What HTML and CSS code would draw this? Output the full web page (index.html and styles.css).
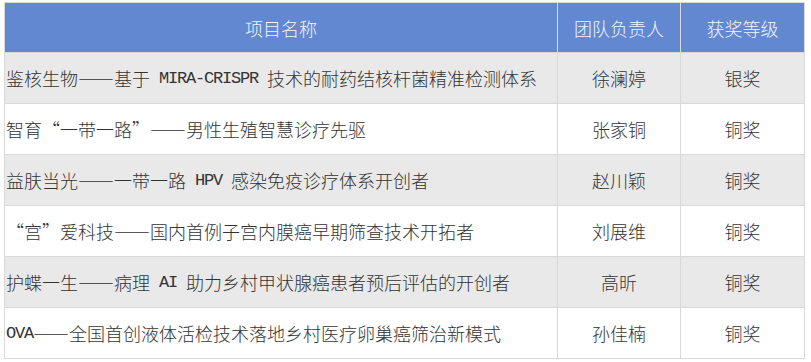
FILE: index.html
```html
<!DOCTYPE html>
<html lang="zh-CN">
<head>
<meta charset="utf-8">
<link rel="stylesheet" href="styles.css">
</head>
<body>
<div class="table">
  <div class="cell head">项目名称</div>
  <div class="cell head">团队负责人</div>
  <div class="cell head">获奖等级</div>

  <div class="cell name odd">鉴核生物——基于<span class="lat"> MIRA-CRISPR </span>技术的耐药结核杆菌精准检测体系</div>
  <div class="cell mid odd">徐澜婷</div>
  <div class="cell mid odd">银奖</div>

  <div class="cell name">智育“一带一路”——男性生殖智慧诊疗先驱</div>
  <div class="cell mid">张家铜</div>
  <div class="cell mid">铜奖</div>

  <div class="cell name odd">益肤当光——一带一路<span class="lat"> HPV </span>感染免疫诊疗体系开创者</div>
  <div class="cell mid odd">赵川颖</div>
  <div class="cell mid odd">铜奖</div>

  <div class="cell name">“宫”爱科技——国内首例子宫内膜癌早期筛查技术开拓者</div>
  <div class="cell mid">刘展维</div>
  <div class="cell mid">铜奖</div>

  <div class="cell name odd">护蝶一生——病理<span class="lat"> AI </span>助力乡村甲状腺癌患者预后评估的开创者</div>
  <div class="cell mid odd">高昕</div>
  <div class="cell mid odd">铜奖</div>

  <div class="cell name"><span class="lat">OVA</span>——全国首创液体活检技术落地乡村医疗卵巢癌筛治新模式</div>
  <div class="cell mid">孙佳楠</div>
  <div class="cell mid">铜奖</div>
</div>
</body>
</html>
```

FILE: styles.css
```css
html, body {
  margin: 0;
  padding: 0;
  background: #ffffff;
}

body {
  font-family: "Noto Sans CJK SC", "Noto Sans", sans-serif;
  font-size: 18px;
  color: #333333;
}

.table {
  display: grid;
  grid-template-columns: 552px 122px 123px;
  grid-template-rows: 49px repeat(6, 50px);
  gap: 1px;
  padding: 1px;
  background: #d9d9d9;
  margin: 2px 0 0 4px;
  width: 801px;
  box-sizing: border-box;
}

.cell {
  display: flex;
  align-items: center;
  background: #ffffff;
  white-space: nowrap;
  overflow: hidden;
  font-weight: 300;
  line-height: 1;
}

.cell.odd {
  background: #e9e9e9;
}

.head {
  background: #6288d2;
  color: #f4f4ff;
  justify-content: center;
}

.name {
  padding-left: 1px;
}

.mid {
  justify-content: center;
}

.lat {
  font-family: "Liberation Mono", monospace;
  font-size: 17px;
  letter-spacing: -1.2px;
  white-space: pre;
}
```
